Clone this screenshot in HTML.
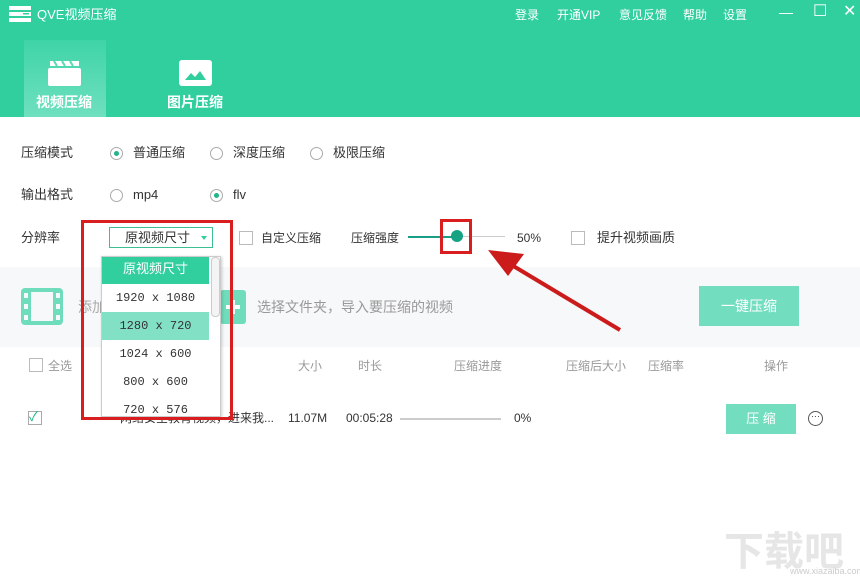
<!DOCTYPE html>
<html><head><meta charset="utf-8"><style>
*{margin:0;padding:0;box-sizing:border-box}
body{width:860px;height:580px;position:relative;background:#fff;font-family:"Liberation Sans","Noto Sans CJK SC",sans-serif;font-size:13px;color:#333;overflow:hidden}
.a{position:absolute;white-space:nowrap;line-height:16px}
.hdr{position:absolute;left:0;top:0;width:860px;height:117px;background:#31cf9e}
.radio{position:absolute;width:13px;height:13px;border:1px solid #aaa;border-radius:50%;background:#fff}
.radio.on::after{content:"";position:absolute;left:3px;top:3px;width:5px;height:5px;border-radius:50%;background:#1fb58a}
.cb{position:absolute;width:14px;height:14px;border:1px solid #bbb;background:#fff}
.g{color:#999}
</style></head><body>
<div class="hdr"></div>
<svg class="a" style="left:9px;top:6px" width="22" height="16"><rect x="0" y="0" width="22" height="4" fill="#fff"/><rect x="0" y="6" width="22" height="4" fill="#fff"/><rect x="0" y="12" width="22" height="4" fill="#fff"/><rect x="14" y="7" width="6" height="1.5" fill="#31cf9e"/></svg>
<div class="a" style="left:37px;top:7px;color:#fff;font-size:13px">QVE视频压缩</div>
<div class="a" style="left:515px;top:7px;color:#fff;font-size:12px">登录</div>
<div class="a" style="left:557px;top:7px;color:#fff;font-size:12px">开通VIP</div>
<div class="a" style="left:619px;top:7px;color:#fff;font-size:12px">意见反馈</div>
<div class="a" style="left:683px;top:7px;color:#fff;font-size:12px">帮助</div>
<div class="a" style="left:723px;top:7px;color:#fff;font-size:12px">设置</div>
<div class="a" style="left:779px;top:4px;color:#fff;font-size:14px">—</div>
<div class="a" style="left:813px;top:4px;color:#fff;font-size:16px">☐</div>
<div class="a" style="left:843px;top:4px;color:#fff;font-size:16px">✕</div>
<div class="a" style="left:24px;top:40px;width:82px;height:77px;background:linear-gradient(#3fd4a8,#6fe0bf)"></div>
<svg class="a" style="left:48px;top:60px" width="33" height="26"><rect x="0" y="8" width="33" height="18" rx="2" fill="#fff"/><path d="M2 1h29v5H2z" fill="#fff"/><path d="M6 1l3 5M14 1l3 5M22 1l3 5" stroke="#5ad9b4" stroke-width="2"/></svg>
<div class="a" style="left:36px;top:94px;color:#fff;font-size:14px;font-weight:bold">视频压缩</div>
<svg class="a" style="left:179px;top:60px" width="33" height="26"><rect width="33" height="26" rx="3" fill="#fff"/><path d="M6 20l6-7 4 4 5-6 6 9z" fill="#31cf9e"/></svg>
<div class="a" style="left:167px;top:94px;color:#fff;font-size:14px;font-weight:bold">图片压缩</div>

<div class="a" style="left:21px;top:145px">压缩模式</div>
<div class="radio on" style="left:110px;top:147px"></div><div class="a" style="left:133px;top:145px">普通压缩</div>
<div class="radio" style="left:210px;top:147px"></div><div class="a" style="left:233px;top:145px">深度压缩</div>
<div class="radio" style="left:310px;top:147px"></div><div class="a" style="left:333px;top:145px">极限压缩</div>
<div class="a" style="left:21px;top:187px">输出格式</div>
<div class="radio" style="left:110px;top:189px"></div><div class="a" style="left:133px;top:187px">mp4</div>
<div class="radio on" style="left:210px;top:189px"></div><div class="a" style="left:233px;top:187px">flv</div>
<div class="a" style="left:21px;top:230px">分辨率</div>
<div class="a" style="left:109px;top:227px;width:104px;height:21px;border:1px solid #3cbf95;background:#fff"></div>
<div class="a" style="left:125px;top:230px">原视频尺寸</div>
<div class="a" style="left:201px;top:236px;width:0;height:0;border-left:3px solid transparent;border-right:3px solid transparent;border-top:4px solid #31cf9e"></div>
<div class="cb" style="left:239px;top:231px"></div><div class="a" style="left:261px;top:230px;font-size:12px">自定义压缩</div>
<div class="a" style="left:351px;top:230px;font-size:12px">压缩强度</div>
<div class="a" style="left:408px;top:236px;width:50px;height:2px;background:#1a9e88"></div>
<div class="a" style="left:458px;top:236px;width:47px;height:1px;background:#ccc"></div>
<div class="a" style="left:451px;top:230px;width:12px;height:12px;border-radius:50%;background:#15a384"></div>
<div class="a" style="left:517px;top:230px;font-size:12px">50%</div>
<div class="cb" style="left:571px;top:231px"></div><div class="a" style="left:597px;top:230px">提升视频画质</div>

<div class="a" style="left:0;top:267px;width:860px;height:80px;background:#f6f8f9"></div>
<svg class="a" style="left:21px;top:288px" width="42" height="37"><rect width="42" height="37" rx="4" fill="#6fdcbc"/><rect x="10" y="4" width="22" height="29" fill="#f6f8f9"/><g fill="#f6f8f9"><rect x="3" y="5" width="4" height="5"/><rect x="3" y="16" width="4" height="5"/><rect x="3" y="27" width="4" height="5"/><rect x="35" y="5" width="4" height="5"/><rect x="35" y="16" width="4" height="5"/><rect x="35" y="27" width="4" height="5"/></g></svg>
<div class="a g" style="left:78px;top:299px;font-size:14px;color:#aaa">添加</div>
<svg class="a" style="left:220px;top:290px" width="26" height="34"><rect width="26" height="34" rx="3" fill="#6fdcbc"/><path d="M13 10v14M6 17h14" stroke="#fff" stroke-width="4"/></svg>
<div class="a" style="left:257px;top:299px;font-size:14px;color:#999">选择文件夹，导入要压缩的视频</div>
<div class="a" style="left:699px;top:286px;width:100px;height:40px;background:#73ddbf;color:#fff;font-size:14px;text-align:center;line-height:40px">一键压缩</div>

<div class="cb" style="left:29px;top:358px"></div><div class="a g" style="left:48px;top:358px;font-size:12px">全选</div>
<div class="a g" style="left:298px;top:358px;font-size:12px">大小</div>
<div class="a g" style="left:358px;top:358px;font-size:12px">时长</div>
<div class="a g" style="left:454px;top:358px;font-size:12px">压缩进度</div>
<div class="a g" style="left:566px;top:358px;font-size:12px">压缩后大小</div>
<div class="a g" style="left:648px;top:358px;font-size:12px">压缩率</div>
<div class="a g" style="left:764px;top:358px;font-size:12px">操作</div>
<div class="cb" style="left:28px;top:411px;border-color:#aaa"></div><div class="a" style="left:29px;top:409px;color:#1fb58a;font-size:13px">✓</div>
<div class="a" style="left:120px;top:410px;font-size:12px">网络安全教育视频，进来我...</div>
<div class="a" style="left:288px;top:410px;font-size:12px">11.07M</div>
<div class="a" style="left:346px;top:410px;font-size:12px">00:05:28</div>
<div class="a" style="left:400px;top:418px;width:101px;height:2px;background:#ccc"></div>
<div class="a" style="left:514px;top:410px;font-size:12px">0%</div>
<div class="a" style="left:726px;top:404px;width:70px;height:30px;background:#73ddbf;color:#fff;text-align:center;line-height:30px">压 缩</div>
<div class="a" style="left:808px;top:411px;width:15px;height:15px;border:1.5px solid #555;border-radius:50%;font-size:9px;line-height:9px;text-align:center">···</div>

<div class="a" style="left:101px;top:256px;width:120px;height:161px;background:#fff;border:1px solid #ccc;box-shadow:1px 1px 3px rgba(0,0,0,.2);overflow:hidden;line-height:normal">
<div style="height:27px;background:#31cf9e;color:#fff;text-align:center;line-height:24px;width:107px">原视频尺寸</div>
<div style="height:28px;text-align:center;line-height:28px;width:107px;font-family:'Liberation Mono',monospace;font-size:12px">1920 x 1080</div>
<div style="height:28px;background:#82e0c4;text-align:center;line-height:28px;width:107px;font-family:'Liberation Mono',monospace;font-size:12px">1280 x 720</div>
<div style="height:28px;text-align:center;line-height:28px;width:107px;font-family:'Liberation Mono',monospace;font-size:12px">1024 x 600</div>
<div style="height:28px;text-align:center;line-height:28px;width:107px;font-family:'Liberation Mono',monospace;font-size:12px">800 x 600</div>
<div style="height:28px;text-align:center;line-height:28px;width:107px;font-family:'Liberation Mono',monospace;font-size:12px">720 x 576</div>
<div style="position:absolute;left:109px;top:0;width:9px;height:60px;border:1px solid #ccc;border-radius:4px;background:#f4f4f4"></div>
</div>
<div class="a" style="left:81px;top:220px;width:152px;height:200px;border:3px solid #d81e1e"></div>
<div class="a" style="left:440px;top:219px;width:32px;height:35px;border:3px solid #d81e1e"></div>
<svg class="a" style="left:480px;top:240px" width="150" height="100"><path d="M140 90L30 24" stroke="#cc1b1b" stroke-width="4"/><path d="M8 10l36 4-16 22z" fill="#cc1b1b"/></svg>
<div class="a" style="left:724px;top:530px;color:#e6e6e6;font-size:40px;font-weight:bold;line-height:44px">下载吧</div>
<div class="a" style="left:790px;top:563px;color:#ccc;font-size:9px">www.xiazaiba.com</div>
</body></html>
